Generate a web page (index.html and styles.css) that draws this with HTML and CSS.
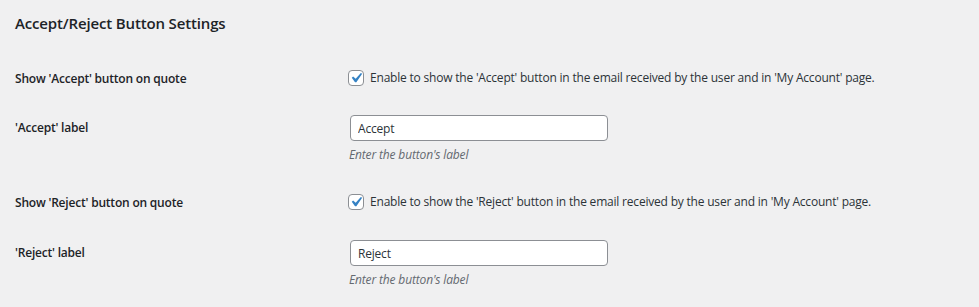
FILE: index.html
```html
<!DOCTYPE html>
<html lang="en">
<head>
<meta charset="utf-8">
<title>Accept/Reject Button Settings</title>
<link rel="stylesheet" href="styles.css">
</head>
<body>
<div class="page">
  <h2 class="title">Accept/Reject Button Settings</h2>

  <div class="row row-check first">
    <div class="label">Show 'Accept' button on quote</div>
    <label class="field check">
      <span class="box"><svg viewBox="0 0 20 20" width="20" height="20"><path d="M14.83 4.89l1.34.94-5.81 8.38H9.02L5.78 9.67l1.34-1.25 2.57 2.4z" fill="#3582c4"/></svg></span>
      <span>Enable to show the 'Accept' button in the email received by the user and in 'My Account' page.</span>
    </label>
  </div>

  <div class="row row-input">
    <div class="label">'Accept' label</div>
    <div class="field">
      <input class="text" type="text" value="Accept">
      <p class="desc">Enter the button's label</p>
    </div>
  </div>

  <div class="row row-check">
    <div class="label">Show 'Reject' button on quote</div>
    <label class="field check">
      <span class="box"><svg viewBox="0 0 20 20" width="20" height="20"><path d="M14.83 4.89l1.34.94-5.81 8.38H9.02L5.78 9.67l1.34-1.25 2.57 2.4z" fill="#3582c4"/></svg></span>
      <span>Enable to show the 'Reject' button in the email received by the user and in 'My Account' page.</span>
    </label>
  </div>

  <div class="row row-input last">
    <div class="label">'Reject' label</div>
    <div class="field">
      <input class="text" type="text" value="Reject">
      <p class="desc">Enter the button's label</p>
    </div>
  </div>
</div>
</body>
</html>
```

FILE: styles.css
```css
html, body {
  margin: 0;
  padding: 0;
  background: #f0f0f1;
}
body {
  font-family: "Open Sans", "Noto Sans", sans-serif;
  font-size: 12px;
  letter-spacing: -0.2px;
  color: #1d2327;
}
.page {
  padding: 13px 15px 0 15px;
}
.title {
  margin: 0;
  font-size: 15px;
  line-height: 20px;
  font-weight: 600;
  letter-spacing: -0.15px;
  color: #1d2327;
}
.row {
  display: grid;
  grid-template-columns: 333px 1fr;
  align-items: start;
}
.label {
  font-weight: 600;
  line-height: 20px;
  color: #1d2327;
}
.row-check {
  margin-top: 28px;
  line-height: 20px;
}
.row-check.first {
  margin-top: 35px;
}
.row-check .label {
  padding-top: 1px;
}
.row-input {
  margin-top: 26px;
}
.row-input.last {
  margin-top: 27px;
}
.row-input .label {
  padding-top: 3px;
}
.check {
  display: flex;
  align-items: center;
  gap: 6px;
  color: #2c3338;
}
.box {
  width: 16px;
  height: 16px;
  box-sizing: border-box;
  border: 1px solid #8c8f94;
  border-radius: 4px;
  background: #fff;
  display: flex;
  align-items: center;
  justify-content: center;
  overflow: hidden;
}
.box svg {
  flex: none;
  width: 20px;
  height: 20px;
  margin: -2px;
}
.field {
  min-width: 0;
}
.text {
  display: block;
  box-sizing: border-box;
  width: 258px;
  height: 26px;
  margin: 0 0 0 2px;
  padding: 0 7px;
  border: 1px solid #8c8f94;
  border-radius: 4px;
  background: #fff;
  font: inherit;
  letter-spacing: inherit;
  color: #2c3338;
  outline: none;
}
.desc {
  margin: 5px 0 0 1px;
  line-height: 18px;
  font-size: 12px;
  font-style: italic;
  letter-spacing: -0.15px;
  color: #646970;
}
```
